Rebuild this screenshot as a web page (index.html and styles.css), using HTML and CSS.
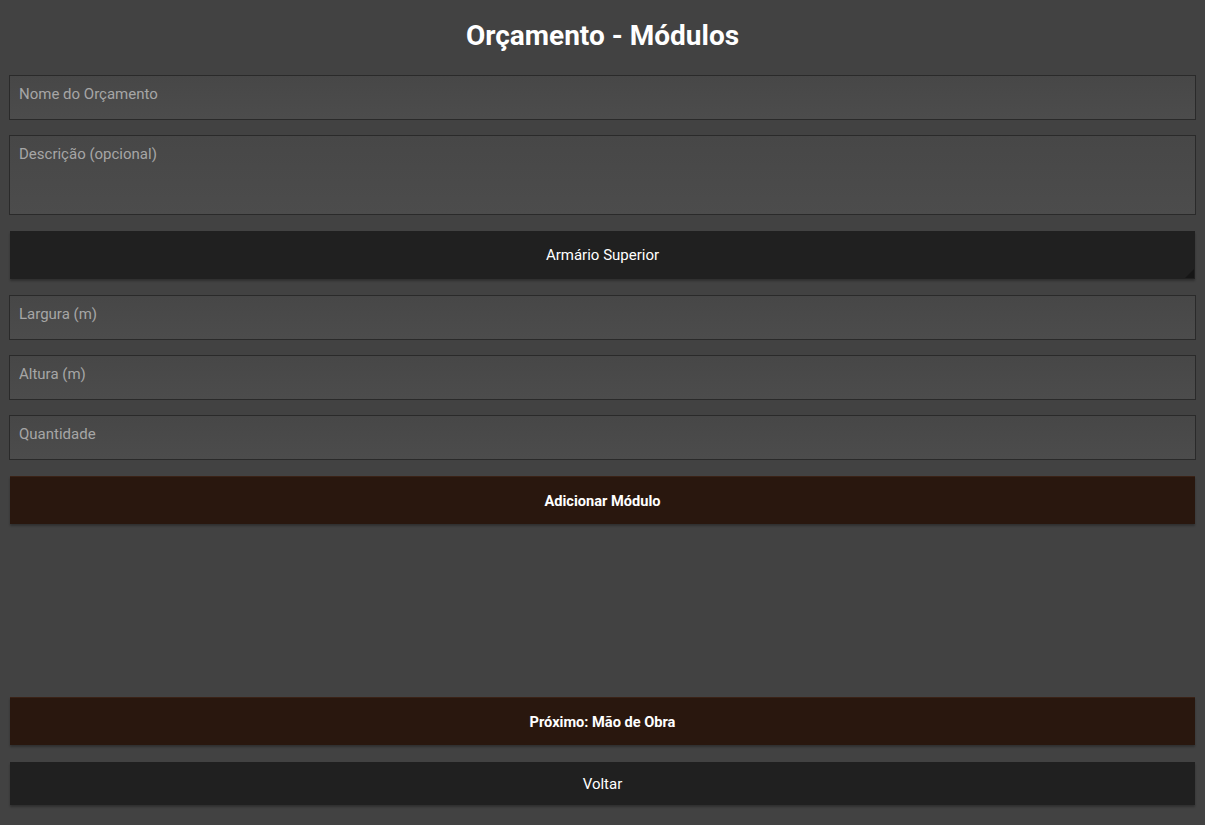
FILE: index.html
```html
<!DOCTYPE html>
<html lang="pt-BR">
<head>
<meta charset="utf-8">
<title>Orçamento - Módulos</title>
<link rel="stylesheet" href="styles.css">
</head>
<body>
<div class="page">
  <h1 class="title">Orçamento - Módulos</h1>
  <div class="form">
    <input class="field" type="text" placeholder="Nome do Orçamento">
    <textarea class="field area" placeholder="Descrição (opcional)"></textarea>
    <div class="picker">
      <select class="picker-select">
        <option>Armário Superior</option>
      </select>
    </div>
    <input class="field" type="text" placeholder="Largura (m)">
    <input class="field" type="text" placeholder="Altura (m)">
    <input class="field" type="text" placeholder="Quantidade">
    <button class="btn btn-brown btn-add" type="button">Adicionar Módulo</button>
  </div>
  <div class="spacer"></div>
  <div class="footer">
    <button class="btn btn-brown" type="button">Próximo: Mão de Obra</button>
    <button class="btn btn-dark btn-back" type="button">Voltar</button>
  </div>
</div>
</body>
</html>
```

FILE: styles.css
```css
* { box-sizing: border-box; }
html, body {
  margin: 0;
  padding: 0;
  height: 100%;
}
body {
  background: #424242;
  font-family: Roboto, "Liberation Sans", Arial, sans-serif;
  color: #ffffff;
}
.page {
  display: flex;
  flex-direction: column;
  height: 100vh;
  padding: 0 9px 20px;
}
.title {
  margin: 0;
  padding: 19px 0 22px;
  font-size: 28px;
  line-height: 34px;
  font-weight: 700;
  text-align: center;
  color: #ffffff;
}
.form {
  display: flex;
  flex-direction: column;
  gap: 15px;
}
.field {
  display: block;
  width: 100%;
  height: 45px;
  margin: 0;
  padding: 9px 9px 16px;
  border: 1px solid #2a2a2a;
  border-radius: 0;
  background: linear-gradient(#474747, #4c4c4c);
  color: #e0e0e0;
  font-family: Roboto, "Liberation Sans", Arial, sans-serif;
  font-size: 15px;
  line-height: 18px;
  outline: none;
}
.field::placeholder { color: #a6a6a6; }
.area {
  height: 80px;
  resize: none;
  overflow: hidden;
}
.picker {
  position: relative;
  margin: 1px 1px 1px;
  height: 48px;
  background: #202020;
  box-shadow: 0 2px 2px rgba(0, 0, 0, 0.28);
}
.picker::after {
  content: "";
  position: absolute;
  right: 1px;
  bottom: 1px;
  width: 0;
  height: 0;
  border-left: 9px solid transparent;
  border-bottom: 9px solid #161616;
}
.picker-select {
  appearance: none;
  -webkit-appearance: none;
  display: block;
  width: 100%;
  height: 100%;
  margin: 0;
  padding: 0;
  border: 0;
  background: transparent;
  color: #ffffff;
  font-family: Roboto, "Liberation Sans", Arial, sans-serif;
  font-size: 15px;
  text-align: center;
  text-align-last: center;
  outline: none;
}
.btn {
  display: block;
  width: calc(100% - 2px);
  margin: 0 1px;
  border: 0;
  border-radius: 0;
  color: #ffffff;
  font-family: Roboto, "Liberation Sans", Arial, sans-serif;
  font-size: 15px;
  cursor: pointer;
  box-shadow: 0 2px 2px rgba(0, 0, 0, 0.28);
}
.btn-brown {
  height: 48px;
  padding-bottom: 1px;
  background: #29170e;
  border-top: 1px solid #3a2216;
  font-size: 14.6px;
  font-weight: 700;
}
.btn-add { margin-top: 1px; }
.btn-dark {
  background: #202020;
}
.btn-back {
  height: 43px;
}
.spacer { flex: 1; }
.footer {
  display: flex;
  flex-direction: column;
  gap: 17px;
}
```
